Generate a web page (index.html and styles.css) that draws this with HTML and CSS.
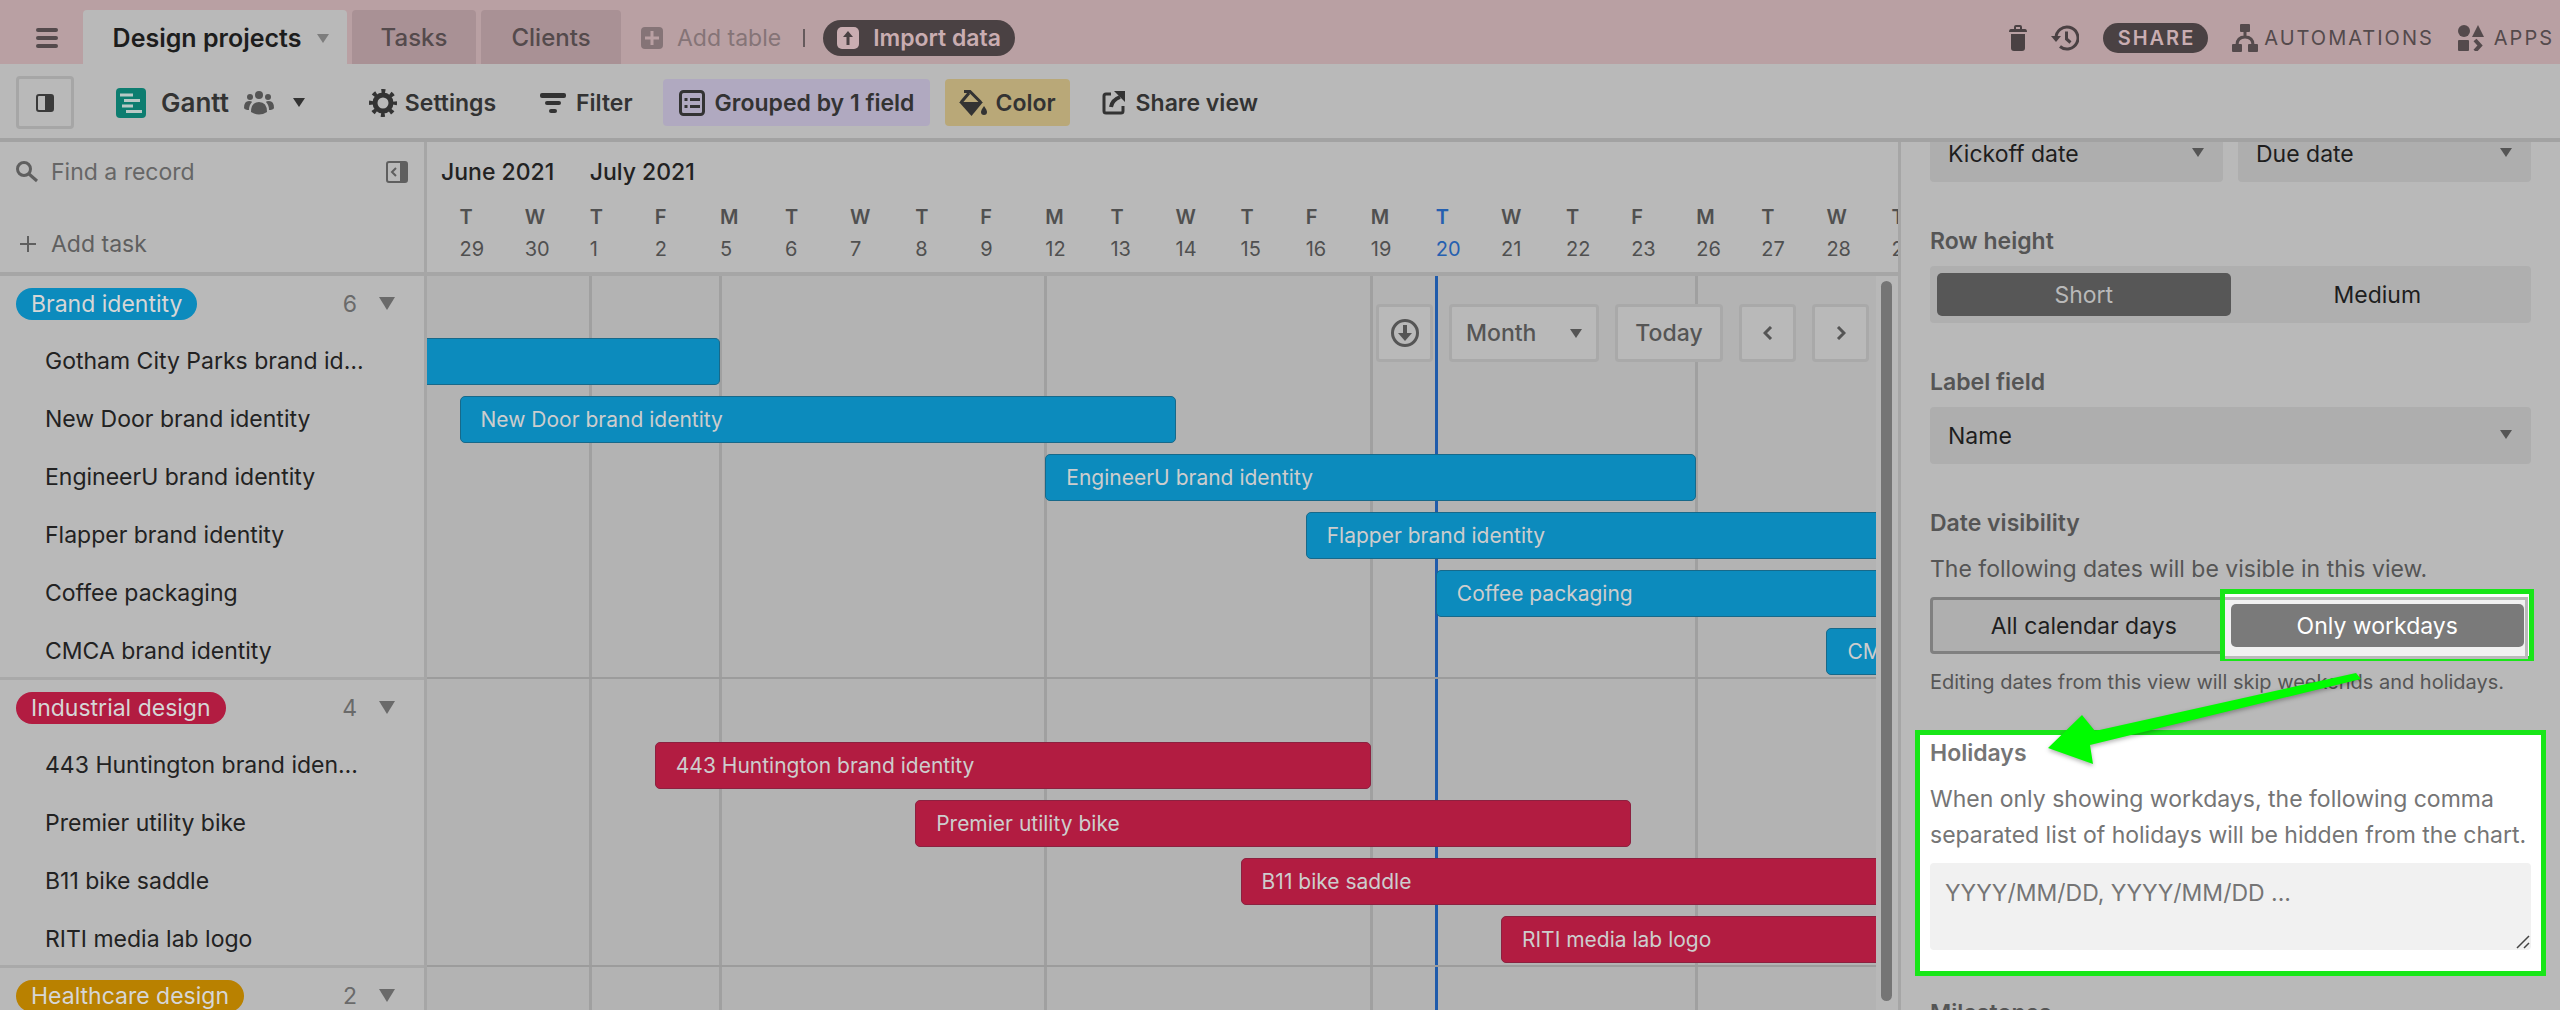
FILE: index.html
```html
<!DOCTYPE html>
<html lang="en">
<head>
<meta charset="utf-8">
<title>Design projects</title>
<meta name="viewport" content="width=device-width, initial-scale=1">
<link rel="stylesheet" href="styles.css">
</head>
<body>
<header class="topbar">
  <button class="plain menu" aria-label="Menu"><svg width="22" height="20" viewBox="0 0 22 20" fill="currentColor"><rect width="22" height="4" rx="2"/><rect y="8" width="22" height="4" rx="2"/><rect y="16" width="22" height="4" rx="2"/></svg></button>
  <nav class="tabs">
    <a class="tab tab-active" href="#projects">Design projects <svg class="tab-caret" width="12" height="9" viewBox="0 0 12 9" fill="currentColor"><path d="M0 0h12L6 9z"/></svg></a>
    <a class="tab tab-tasks" href="#tasks">Tasks</a>
    <a class="tab tab-clients" href="#clients">Clients</a>
  </nav>
  <button class="plain add-table"><svg width="22" height="22" viewBox="0 0 22 22"><rect width="22" height="22" rx="4" fill="currentColor"/><path d="M11 4v14M4 11h14" stroke="#b9a0a3" stroke-width="3"/></svg>Add table</button>
  <span class="divider"></span>
  <button class="import"><svg width="22" height="22" viewBox="0 0 22 22"><rect width="22" height="22" rx="5" fill="#c9adb1"/><path d="M11 4l5 6h-3.500v8h-3v-8H6z" fill="#4a4143"/></svg>Import data</button>
  <div class="top-actions">
    <button class="plain" aria-label="Trash"><svg width="18" height="26" viewBox="0 0 18 26" fill="currentColor"><path d="M5 4V2q0-2 2-2h4q2 0 2 2v2h3q2 0 2 3H0q0-3 2-3zM7 2v2h4V2z" fill-rule="evenodd"/><path d="M2 9h14v14q0 3-3 3H5q-3 0-3-3z"/></svg></button>
    <button class="plain" aria-label="History"><svg width="28" height="26" viewBox="0 0 28 26" fill="none" stroke="currentColor" stroke-width="3"><path d="M5 13a11 11 0 1 1 4 8.500"/><path d="M15.500 6.500V14l4 3.500"/><path d="M0 11h10l-5 6z" fill="currentColor" stroke="none"/></svg></button>
    <button class="share">SHARE</button>
    <button class="plain caps"><svg width="26" height="28" viewBox="0 0 26 28" fill="currentColor"><rect x="8" width="10" height="8" rx="1"/><rect y="20" width="10" height="8" rx="1"/><rect x="16" y="20" width="10" height="8" rx="1"/><path d="M13 7v6M5 21q0-8 8-8t8 8" fill="none" stroke="currentColor" stroke-width="3"/></svg>AUTOMATIONS</button>
    <button class="plain caps apps"><svg width="26" height="26" viewBox="0 0 26 26" fill="currentColor"><circle cx="6" cy="6" r="6"/><path d="M20 0l6 12H14z"/><rect y="15" width="11" height="11" rx="1"/><path d="M17 15l5 5.500-5 5.500" fill="none" stroke="currentColor" stroke-width="4"/></svg>APPS</button>
  </div>
</header>

<div class="toolbar">
  <button class="sidebar-toggle" aria-label="Toggle sidebar"><svg width="18" height="18" viewBox="0 0 18 18"><rect x="1" y="1" width="16" height="16" rx="2" fill="none" stroke="#3a3a3a" stroke-width="2"/><rect x="9" y="1" width="8" height="16" fill="#3a3a3a"/></svg></button>
  <button class="plain view-name"><svg width="30" height="30" viewBox="0 0 30 30"><rect width="30" height="30" rx="4" fill="#0d7d70"/><path d="M4 7h13M8 12.500h16M6 18h11M10 23.500h16" stroke="#b9c9c6" stroke-width="3"/></svg>Gantt <svg class="people" width="30" height="24" viewBox="0 0 30 24" fill="currentColor"><circle cx="15" cy="4" r="4"/><circle cx="6" cy="6" r="3"/><circle cx="24" cy="6" r="3"/><path d="M7 21q0-10 8-10t8 10q-8 5-16 0zM0 17q0-7 5-7 3 0 3 1-3 3-3 8-4 0-5-2zM30 17q0-7-5-7-3 0-3 1 3 3 3 8 4 0 5-2z"/></svg><svg width="12" height="9" viewBox="0 0 12 9" fill="currentColor"><path d="M0 0h12L6 9z"/></svg></button>
  <button class="plain tool tool-settings"><svg width="28" height="28" viewBox="0 0 28 28" fill="none" stroke="currentColor"><circle cx="14" cy="14" r="8" stroke-width="5"/><circle cx="14" cy="14" r="12" stroke-width="4" stroke-dasharray="4 5.425" stroke-dashoffset="2"/></svg>Settings</button>
  <button class="plain tool tool-filter"><svg width="26" height="20" viewBox="0 0 26 20" fill="currentColor"><rect width="26" height="5" rx="2"/><rect x="5" y="8" width="16" height="4" rx="2"/><rect x="9" y="16" width="8" height="4" rx="2"/></svg>Filter</button>
  <button class="plain tool grouped"><svg width="26" height="26" viewBox="0 0 26 26"><rect x="1.500" y="1.500" width="23" height="23" rx="3" fill="none" stroke="currentColor" stroke-width="3"/><path d="M5.500 9.500h3M5.500 16.500h3M11 9.500h10M11 16.500h10" stroke="currentColor" stroke-width="3"/></svg>Grouped by 1 field</button>
  <button class="plain tool color"><svg width="28" height="26" viewBox="0 0 28 26"><path d="M5 1.500h6l11 11M2 12.500L10 3" fill="none" stroke="currentColor" stroke-width="3"/><path d="M0 12h24L12.500 26z" fill="currentColor"/><path d="M25 16q3 4 3 6a3 3 0 0 1-6 0q0-2 3-6z" fill="currentColor"/></svg>Color</button>
  <button class="plain tool share-view"><svg width="24" height="24" viewBox="0 0 24 24" fill="none" stroke="currentColor" stroke-width="3"><path d="M9 3H4q-2 0-2 2v15q0 2 2 2h15q2 0 2-2v-5"/><path d="M9 16q1-7 9-10" stroke-width="4"/><path d="M12 0h11v11z" fill="currentColor" stroke="none"/></svg>Share view</button>
</div>

<main class="workspace">
  <aside class="records">
    <div class="records-head">
      <label class="find"><svg width="22" height="22" viewBox="0 0 22 22" fill="none" stroke="currentColor" stroke-width="3"><circle cx="8" cy="8" r="6.500"/><path d="M13 13l8 7"/></svg><input type="text" placeholder="Find a record" aria-label="Find a record"></label>
      <button class="plain collapse" aria-label="Collapse list"><svg width="22" height="22" viewBox="0 0 22 22"><rect x="1" y="1" width="20" height="20" rx="2" fill="none" stroke="currentColor" stroke-width="2"/><path d="M14 1h7v20h-7z" fill="currentColor"/><path d="M10 7l-4 4 4 4" fill="none" stroke="currentColor" stroke-width="2"/></svg></button>
      <button class="plain add-task"><svg width="16" height="16" viewBox="0 0 16 16" stroke="currentColor" stroke-width="2"><path d="M8 0v16M0 8h16"/></svg>Add task</button>
    </div>
    <section class="group">
      <div class="group-head"><span class="pill blue">Brand identity</span><span class="count">6</span><svg width="16" height="13" viewBox="0 0 16 13" fill="currentColor"><path d="M0 0h16L8 13z"/></svg></div>
      <ul>
        <li>Gotham City Parks brand identity</li>
        <li>New Door brand identity</li>
        <li>EngineerU brand identity</li>
        <li>Flapper brand identity</li>
        <li>Coffee packaging</li>
        <li>CMCA brand identity</li>
      </ul>
    </section>
    <section class="group">
      <div class="group-head"><span class="pill red">Industrial design</span><span class="count">4</span><svg width="16" height="13" viewBox="0 0 16 13" fill="currentColor"><path d="M0 0h16L8 13z"/></svg></div>
      <ul>
        <li>443 Huntington brand identity</li>
        <li>Premier utility bike</li>
        <li>B11 bike saddle</li>
        <li>RITI media lab logo</li>
      </ul>
    </section>
    <section class="group">
      <div class="group-head"><span class="pill yellow">Healthcare design</span><span class="count">2</span><svg width="16" height="13" viewBox="0 0 16 13" fill="currentColor"><path d="M0 0h16L8 13z"/></svg></div>
    </section>
  </aside>

  <section class="chart">
    <div class="chart-head">
      <div class="months days-grid"><span class="june">June 2021</span><span class="july">July 2021</span></div>
      <div class="days days-grid">
        <div class="day first"><b>T</b>29</div><div class="day"><b>W</b>30</div><div class="day"><b>T</b>1</div><div class="day"><b>F</b>2</div>
        <div class="day"><b>M</b>5</div><div class="day"><b>T</b>6</div><div class="day"><b>W</b>7</div><div class="day"><b>T</b>8</div><div class="day"><b>F</b>9</div>
        <div class="day"><b>M</b>12</div><div class="day"><b>T</b>13</div><div class="day"><b>W</b>14</div><div class="day"><b>T</b>15</div><div class="day"><b>F</b>16</div>
        <div class="day"><b>M</b>19</div><div class="day today"><b>T</b>20</div><div class="day"><b>W</b>21</div><div class="day"><b>T</b>22</div><div class="day"><b>F</b>23</div>
        <div class="day"><b>M</b>26</div><div class="day"><b>T</b>27</div><div class="day"><b>W</b>28</div><div class="day"><b>T</b>29</div>
      </div>
    </div>
    <div class="chart-body">
      <div class="lines days-grid">
        <i style="grid-column:4"></i><i style="grid-column:6"></i><i style="grid-column:11"></i><i style="grid-column:16"></i><i style="grid-column:21"></i>
        <i class="now" style="grid-column:17"></i>
      </div>
      <div class="bars">
        <div class="bar-group">
          <div class="bar-row days-grid"><div class="bar blue from-before" style="grid-column:1/6"></div></div>
          <div class="bar-row days-grid"><div class="bar blue" style="grid-column:2/13">New Door brand identity</div></div>
          <div class="bar-row days-grid"><div class="bar blue" style="grid-column:11/21">EngineerU brand identity</div></div>
          <div class="bar-row days-grid"><div class="bar blue" style="grid-column:15/25">Flapper brand identity</div></div>
          <div class="bar-row days-grid"><div class="bar blue" style="grid-column:17/25">Coffee packaging</div></div>
          <div class="bar-row days-grid"><div class="bar blue" style="grid-column:23/25">CMCA brand identity</div></div>
        </div>
        <div class="bar-group">
          <div class="bar-row days-grid"><div class="bar red" style="grid-column:5/16">443 Huntington brand identity</div></div>
          <div class="bar-row days-grid"><div class="bar red" style="grid-column:9/20">Premier utility bike</div></div>
          <div class="bar-row days-grid"><div class="bar red" style="grid-column:14/25">B11 bike saddle</div></div>
          <div class="bar-row days-grid"><div class="bar red" style="grid-column:18/25">RITI media lab logo</div></div>
        </div>
        <div class="bar-group"></div>
      </div>
      <div class="controls">
        <button class="ctl square" aria-label="Download"><svg width="28" height="28" viewBox="0 0 28 28"><circle cx="14" cy="14" r="12.500" fill="none" stroke="currentColor" stroke-width="3"/><path d="M12 6h4v8h5l-7 8-7-8h5z" fill="currentColor"/></svg></button>
        <button class="ctl month">Month<svg width="12" height="9" viewBox="0 0 12 9" fill="currentColor"><path d="M0 0h12L6 9z"/></svg></button>
        <button class="ctl now-button">Today</button>
        <button class="ctl square" aria-label="Previous"><svg width="10" height="14" viewBox="0 0 10 14" fill="none" stroke="currentColor" stroke-width="3"><path d="M8 1L2 7l6 6"/></svg></button>
        <button class="ctl square" aria-label="Next"><svg width="10" height="14" viewBox="0 0 10 14" fill="none" stroke="currentColor" stroke-width="3"><path d="M2 1l6 6-6 6"/></svg></button>
      </div>
      <div class="scrollbar"><span></span></div>
    </div>
  </section>

  <aside class="panel">
    <div class="dates">
      <div class="select"><select aria-label="Start date field"><option>Kickoff date</option></select></div>
      <div class="select"><select aria-label="End date field"><option>Due date</option></select></div>
    </div>
    <section class="field">
      <h2>Row height</h2>
      <div class="segments"><button class="seg seg-on">Short</button><button class="seg">Medium</button></div>
    </section>
    <section class="field">
      <label class="heading" for="label-field">Label field</label>
      <div class="select"><select id="label-field"><option>Name</option></select></div>
    </section>
    <section class="field">
      <h2>Date visibility</h2>
      <p class="intro">The following dates will be visible in this view.</p>
      <div class="segments outlined"><span class="spotlight"></span><button class="seg">All calendar days</button><button class="seg seg-lit">Only workdays</button></div>
      <p class="note">Editing dates from this view will skip weekends and holidays.</p>
    </section>
    <section class="holidays">
      <label class="heading" for="holidays">Holidays</label>
      <p>When only showing workdays, the following comma separated list of holidays will be hidden from the chart.</p>
      <div class="area"><textarea id="holidays" placeholder="YYYY/MM/DD, YYYY/MM/DD ..."></textarea><svg class="grip" width="14" height="14" viewBox="0 0 14 14" stroke="#444" stroke-width="1.500"><path d="M1 13L13 1M8 13l5-5"/></svg></div>
      <svg class="arrow" width="330" height="110" viewBox="0 0 330 110"><path d="M8 83L42 50 55 66 316 8 321 14 50 80 53 99z" fill="#00fc00"/></svg>
    </section>
    <section class="milestones"><h2>Milestones</h2></section>
  </aside>
</main>
</body>
</html>
```
FILE: styles.css
```css
* { box-sizing: border-box; }
body {
  margin: 0;
  height: 100vh;
  display: flex;
  flex-direction: column;
  overflow: hidden;
  background: #b9b9b9;
  color: #222;
  font: 23px/32px Inter, "Liberation Sans", sans-serif;
}
button, input, select, textarea { font: inherit; color: inherit; margin: 0; }
button { padding: 0; white-space: nowrap; }
svg { display: block; flex: none; }
h2, p, ul { margin: 0; padding: 0; }
a { color: inherit; text-decoration: none; }

.plain {
  display: flex;
  align-items: center;
  border: 0;
  background: none;
}

/* Top bar */
.topbar {
  flex: none;
  display: flex;
  align-items: center;
  height: 64px;
  padding-top: 12px;
  background: #b9a0a3;
  color: #544a4c;
}
.menu { width: 83px; justify-content: center; padding-left: 10px; }
.tabs {
  display: flex;
  gap: 5px;
  align-self: stretch;
  margin-top: -2px;
  font-size: 24px;
  font-weight: 500;
}
.tab {
  display: flex;
  align-items: center;
  justify-content: center;
  padding-top: 2px;
  border-radius: 4px 4px 0 0;
  background: #a99195;
}
.tab-active {
  width: 264px;
  padding-left: 12px;
  gap: 16px;
  background: #b9b9b9;
  color: #1d1d1d;
  font-size: 25px;
  font-weight: 600;
}
.tab-caret { color: #7d7d7d; }
.tab-tasks { width: 124px; }
.tab-clients { width: 140px; }
.add-table { gap: 14px; margin-left: 20px; color: #857477; }
.divider { width: 2px; height: 18px; margin: 0 18px 0 22px; background: #655a5c; }
.import {
  display: flex;
  align-items: center;
  gap: 14px;
  height: 36px;
  padding: 0 14px;
  border: 0;
  border-radius: 18px;
  background: #4a4143;
  color: #c9adb1;
  font-weight: 600;
}
.top-actions {
  display: flex;
  align-items: center;
  gap: 24px;
  margin-left: auto;
  padding-right: 6px;
  color: #4a4143;
}
.share {
  height: 30px;
  padding: 0 13px 0 15px;
  border: 0;
  border-radius: 15px;
  background: #4a4143;
  color: #c9adb1;
  font-size: 20px;
  line-height: 30px;
  font-weight: 600;
  letter-spacing: 2px;
}
.caps { gap: 6px; font-size: 20px; letter-spacing: 2px; color: #544a4c; }
.apps { gap: 10px; }

/* View toolbar */
.toolbar {
  flex: none;
  display: flex;
  align-items: center;
  height: 78px;
  padding: 3px 0 0 16px;
  border-bottom: 4px solid #a2a2a2;
  color: #333;
}
.sidebar-toggle {
  display: grid;
  place-items: center;
  width: 58px;
  height: 53px;
  margin-right: 42px;
  border: 3px solid #a6a6a6;
  border-radius: 4px;
  background: none;
}
.view-name { gap: 15px; font-size: 26px; font-weight: 600; }
.people { color: #555; margin-right: 4px; }
.tool { gap: 8px; height: 47px; font-weight: 600; border-radius: 4px; }
.tool-settings { margin-left: 64px; }
.tool-filter { margin-left: 44px; gap: 10px; }
.grouped { margin-left: 30px; padding: 0 16px; gap: 10px; background: #b0a9c0; }
.color { margin-left: 15px; padding: 0 14px; background: #b9a878; }
.share-view { margin-left: 32px; gap: 10px; }

/* Workspace */
.workspace {
  flex: 1;
  min-height: 0;
  display: grid;
  grid-template-columns: 427px minmax(0, 1fr) 662px;
}
.records { overflow: hidden; border-right: 3px solid #a6a6a6; }
.records-head {
  display: grid;
  grid-template-columns: 1fr auto;
  align-content: start;
  row-gap: 40px;
  height: 134px;
  padding: 14px 16px 0;
  border-bottom: 4px solid #a6a6a6;
  color: #5f5f5f;
}
.find { display: flex; align-items: center; gap: 13px; }
.find input { width: 100%; height: 32px; padding: 0; border: 0; background: none; }
.find input::placeholder { color: #666; opacity: 1; }
.add-task { gap: 15px; padding-left: 4px; }
.group + .group { border-top: 3px solid #a9a9a9; }
.group-head {
  display: flex;
  align-items: center;
  height: 53px;
  padding: 2px 29px 0 16px;
  color: #6a6a6a;
}
.pill {
  padding: 0 15px;
  border-radius: 16px;
  color: #d6d6d6;
}
.count { margin: 0 22px 0 auto; }
.blue { background: #0c8bbd; border-color: #17698a; }
.red { background: #b21c41; border-color: #8c2140; }
.yellow { background: #b98100; }
.group li {
  height: 58px;
  padding: 16px 59px 10px 45px;
  overflow: hidden;
  white-space: nowrap;
  text-overflow: ellipsis;
  list-style: none;
}

/* Chart */
.chart { display: flex; flex-direction: column; min-width: 0; overflow: hidden; }
.days-grid {
  display: grid;
  grid-template-columns: minmax(0, 10fr) repeat(22, minmax(0, 20fr)) minmax(0, 2fr);
}
.chart-head {
  flex: none;
  height: 134px;
  padding-top: 14px;
  border-bottom: 4px solid #a6a6a6;
}
.months { font-weight: 500; white-space: nowrap; }
.june { grid-column: 1 / 4; padding-left: 14px; }
.july { grid-column: 4 / 10; }
.days { margin-top: 13px; font-size: 20px; color: #505050; }
.day { display: flex; flex-direction: column; }
.day b { font-weight: 600; }
.first { grid-column: 2; }
.today { color: #2560b0; }
.chart-body { flex: 1; min-height: 0; display: grid; position: relative; background: #b3b3b3; }
.lines, .bars { grid-area: 1 / 1; min-height: 0; }
.lines i { grid-row: 1; width: 3px; background: #a0a0a0; margin-left: -1px; }
.lines .now { background: #1f5bab; }
.bars { overflow: hidden; }
.bar-group { padding-top: 53px; }
.bar-group + .bar-group { border-top: 2px solid #9c9c9c; padding-top: 54px; }
.bar-row { height: 58px; padding: 9px 0 2px; }
.bar {
  overflow: hidden;
  padding: 7px 20px;
  border-width: 1px;
  border-style: solid;
  border-radius: 5px;
  color: #cdcdcd;
  font-size: 21px;
  line-height: 32px;
  white-space: nowrap;
}
.from-before { border-left: 0; border-radius: 0 5px 5px 0; }
.controls {
  position: absolute;
  top: 28px;
  right: 29px;
  display: flex;
  gap: 16px;
}
.ctl {
  display: flex;
  align-items: center;
  justify-content: center;
  height: 58px;
  border: 3px solid #a9a9a9;
  border-radius: 4px;
  background: #b9b9b9;
  color: #555;
  font-weight: 500;
}
.square { width: 57px; }
.month { width: 150px; padding: 0 14px; justify-content: space-between; }
.now-button { width: 108px; }
.scrollbar {
  position: absolute;
  top: 0;
  right: 0;
  bottom: 0;
  width: 22px;
  padding: 5px 6px 9px 5px;
  background: #b8b8b8;
}
.scrollbar span { display: block; height: 100%; border-radius: 6px; background: #757575; }

/* Settings panel */
.panel {
  overflow: hidden;
  padding: 0 29px;
  border-left: 3px solid #a6a6a6;
  color: #555;
}
.dates { display: grid; grid-template-columns: 1fr 1fr; gap: 15px; margin-top: -17px; }
.select { position: relative; }
.select::after {
  content: "";
  position: absolute;
  right: 19px;
  top: 23px;
  border: 6px solid transparent;
  border-top: 9px solid #555;
  border-bottom: 0;
}
.select select {
  appearance: none;
  display: block;
  width: 100%;
  height: 57px;
  padding: 0 18px;
  border: 0;
  border-radius: 4px;
  background: #aeaeae;
  color: #1e1e1e;
}
.field { margin-top: 43px; }
h2, .heading { display: block; font-size: 23px; line-height: 32px; font-weight: 600; }
.field h2, .field .heading { margin-bottom: 9px; }
.panel p { line-height: 36px; }
.panel .intro { margin-top: 12px; }
.segments {
  position: relative;
  display: grid;
  grid-template-columns: 1fr 1fr;
  height: 57px;
  padding: 7px;
  border-radius: 4px;
  background: #afafaf;
}
.seg { border: 0; border-radius: 5px; background: none; color: #1e1e1e; position: relative; }
.seg-on { background: #575757; color: #b9b9b9; }
.outlined { margin-top: 10px; padding: 4px; border: 3px solid #808080; }
.seg-lit { background: #7a7a7a; color: #fff; }
.spotlight {
  position: absolute;
  inset: -11px -6px -10px 287px;
  padding: 3px 1px 3px 0;
  border: 5px solid #18e618;
  background: #fff;
}
.spotlight::before {
  content: "";
  display: block;
  height: 100%;
  border: 3px solid #bababa;
  border-left: 0;
  background: #f1f1f1;
}
.panel .note { margin-top: 14px; font-size: 20px; line-height: 28px; }
.holidays {
  position: relative;
  margin: 34px -15px 0;
  padding: 2px 10px 21px;
  border: 5px solid #18e618;
  background: #fff;
  color: #757575;
}
.holidays p { margin: 12px 0 10px; }
.area { position: relative; }
.area textarea {
  display: block;
  width: 100%;
  height: 87px;
  padding: 14px 15px;
  border: 0;
  border-radius: 4px;
  background: #f1f1f1;
  resize: none;
}
.area textarea::placeholder { color: #757575; opacity: 1; }
.grip { position: absolute; right: 1px; bottom: 1px; }
.arrow {
  position: absolute;
  left: 120px;
  top: -70px;
  filter: drop-shadow(0 2px 2px rgba(0, 0, 0, .3));
}
.milestones { margin-top: 21px; }
```
